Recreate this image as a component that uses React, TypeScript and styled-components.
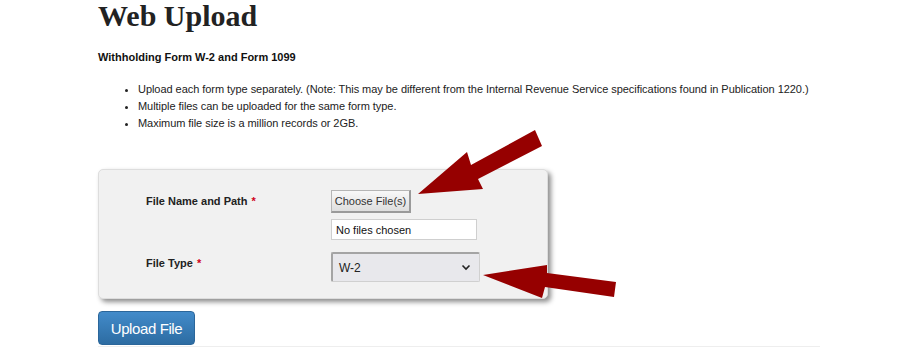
import React from "react";
import styled, { createGlobalStyle } from "styled-components";

const Global = createGlobalStyle`
  body {
    margin: 0;
    background: #fff;
    font-family: "Liberation Sans", Arial, sans-serif;
    color: #222;
  }
`;

const Page = styled.div`
  position: relative;
  width: 912px;
  height: 350px;
  overflow: hidden;
`;

const Content = styled.div`
  width: 722px;
  margin-left: 98px;
  border-bottom: 1px solid #eee;
`;

const Title = styled.h1`
  margin: 0;
  padding-top: 1px;
  font-family: "Liberation Serif", "Times New Roman", serif;
  font-size: 30px;
  line-height: 29px;
  font-weight: 700;
  color: #222;
`;

const Subtitle = styled.div`
  margin-top: 20px;
  font-size: 11px;
  line-height: 15px;
  font-weight: 700;
  color: #111;
`;

const Notes = styled.ul`
  margin: 16px 0 0;
  padding-left: 40px;
  font-size: 11px;
  line-height: 17px;
  letter-spacing: -0.05px;
  color: #222;
`;

const Panel = styled.div`
  margin-top: 37px;
  width: 450px;
  height: 130px;
  box-sizing: border-box;
  padding: 20px 0 0 47px;
  background: #f1f1f1;
  border: 1px solid #ddd;
  border-radius: 5px;
  box-shadow: 3px 3px 5px rgba(0, 0, 0, 0.45);
  display: grid;
  grid-template-columns: 185px 1fr;
  align-content: start;
  row-gap: 12px;
`;

const Label = styled.div`
  padding-top: 4px;
  font-size: 11px;
  line-height: 15px;
  font-weight: 700;
  color: #222;
`;

const Req = styled.span`
  color: #d0021b;
  margin-left: 4px;
`;

const Controls = styled.div`
  display: flex;
  flex-direction: column;
  align-items: flex-start;
  gap: 6px;
`;

const ChooseButton = styled.div`
  box-sizing: border-box;
  width: 80px;
  height: 23px;
  display: flex;
  align-items: center;
  justify-content: center;
  font-size: 11px;
  color: #333;
  background: linear-gradient(#f8f8f8, #dedede);
  border: 1px solid #b5b5b5;
  border-right: 2px solid #9a9a9a;
  border-bottom: 2px solid #9a9a9a;
`;

const FileField = styled.div`
  box-sizing: border-box;
  width: 146px;
  height: 21px;
  padding-left: 4px;
  display: flex;
  align-items: center;
  font-size: 11px;
  color: #111;
  background: #fff;
  border: 1px solid #cfcfcf;
`;

const SelectBox = styled.div`
  box-sizing: border-box;
  width: 149px;
  height: 30px;
  padding: 0 8px 0 6px;
  display: flex;
  align-items: center;
  justify-content: space-between;
  font-size: 12px;
  color: #222;
  background: #e8e8ec;
  border: 1px solid #d0d0d0;
  border-top: 2px solid #a4a4a4;
  border-left: 2px solid #a4a4a4;
  border-radius: 2px;
`;

const UploadButton = styled.button`
  margin: 12px 0 0;
  width: 97px;
  height: 34px;
  padding: 0;
  font-family: "Liberation Sans", Arial, sans-serif;
  font-size: 15px;
  letter-spacing: -0.4px;
  color: #fff;
  background: linear-gradient(#428bca, #2d6ca2);
  border: 1px solid #2b669a;
  border-radius: 4px;
  display: block;
`;

const Spacer = styled.div`
  height: 1px;
`;

const Arrows = styled.svg`
  position: absolute;
  left: 0;
  top: 0;
  pointer-events: none;
`;

const Chevron = () => (
  <svg width="10" height="7" viewBox="0 0 10 7">
    <path d="M1.5 1.5 L5 5 L8.5 1.5" fill="none" stroke="#222" strokeWidth="1.6" />
  </svg>
);

export default function App() {
  return (
    <Page>
      <Global />
      <Content>
        <Title>Web Upload</Title>
        <Subtitle>Withholding Form W-2 and Form 1099</Subtitle>
        <Notes>
          <li>
            Upload each form type separately. (Note: This may be different from the Internal
            Revenue Service specifications found in Publication 1220.)
          </li>
          <li>Multiple files can be uploaded for the same form type.</li>
          <li>Maximum file size is a million records or 2GB.</li>
        </Notes>
        <Panel>
          <Label>
            File Name and Path<Req>*</Req>
          </Label>
          <Controls>
            <ChooseButton>Choose File(s)</ChooseButton>
            <FileField>No files chosen</FileField>
          </Controls>
          <Label>
            File Type<Req>*</Req>
          </Label>
          <Controls>
            <SelectBox>
              W-2
              <Chevron />
            </SelectBox>
          </Controls>
        </Panel>
        <UploadButton>Upload File</UploadButton>
        <Spacer />
      </Content>
      <Arrows width="912" height="350" viewBox="0 0 912 350">
        <polygon
          fill="#960000"
          points="418,194 467,152 471,165 535,130 542,146 478,179 483,189"
        />
        <polygon
          fill="#960000"
          points="483,275 547,265 547,273 616,282 614,297 545,287 542,298"
        />
      </Arrows>
    </Page>
  );
}
